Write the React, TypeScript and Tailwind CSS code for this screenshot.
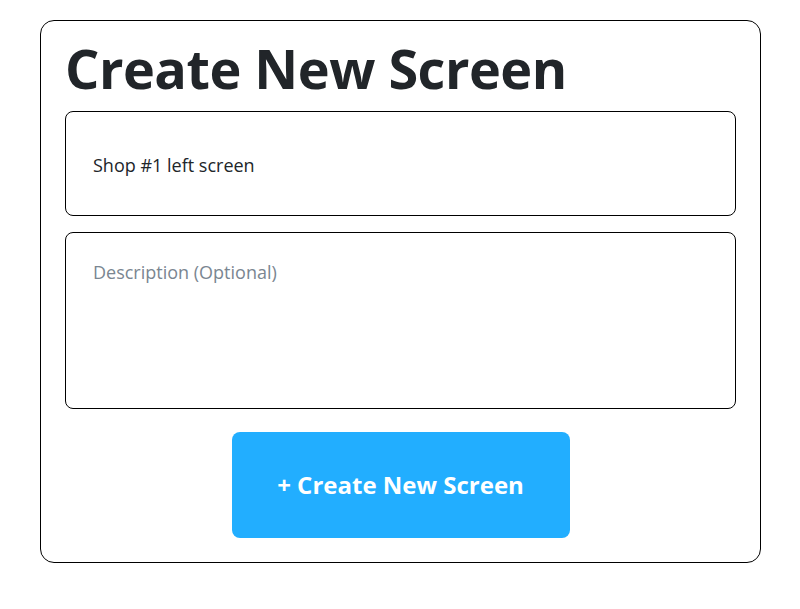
import React from "react";

export default function App() {
  return (
    <div className="bg-white w-[800px] h-[609px] pt-[20px] pl-[40px]" style={{ fontFamily: '"Open Sans", sans-serif' }}>
      <div className="w-[721px] h-[543px] border-[1.5px] border-black rounded-[14px] px-[24px] pt-[13px] flex flex-col">
        <h1 className="text-[54px] leading-[68px] font-bold tracking-[-0.5px] text-[#212529] whitespace-nowrap">Create New Screen</h1>
        <div className="mt-[9px] h-[105px] border-[1.5px] border-black rounded-[8px] px-[27px] pt-[3px] flex items-center text-[18px] text-[#212529]">
          Shop #1 left screen
        </div>
        <div className="mt-[16px] h-[177px] border-[1.5px] border-black rounded-[8px] px-[27px] pt-[26px] text-[18px] leading-[27px] text-[#7a8691]">
          Description (Optional)
        </div>
        <div className="flex justify-center mt-[23px]">
          <button className="w-[338px] h-[106px] rounded-[8px] bg-[#22aeff] text-white text-[24px] font-bold">
            + Create New Screen
          </button>
        </div>
      </div>
    </div>
  );
}
